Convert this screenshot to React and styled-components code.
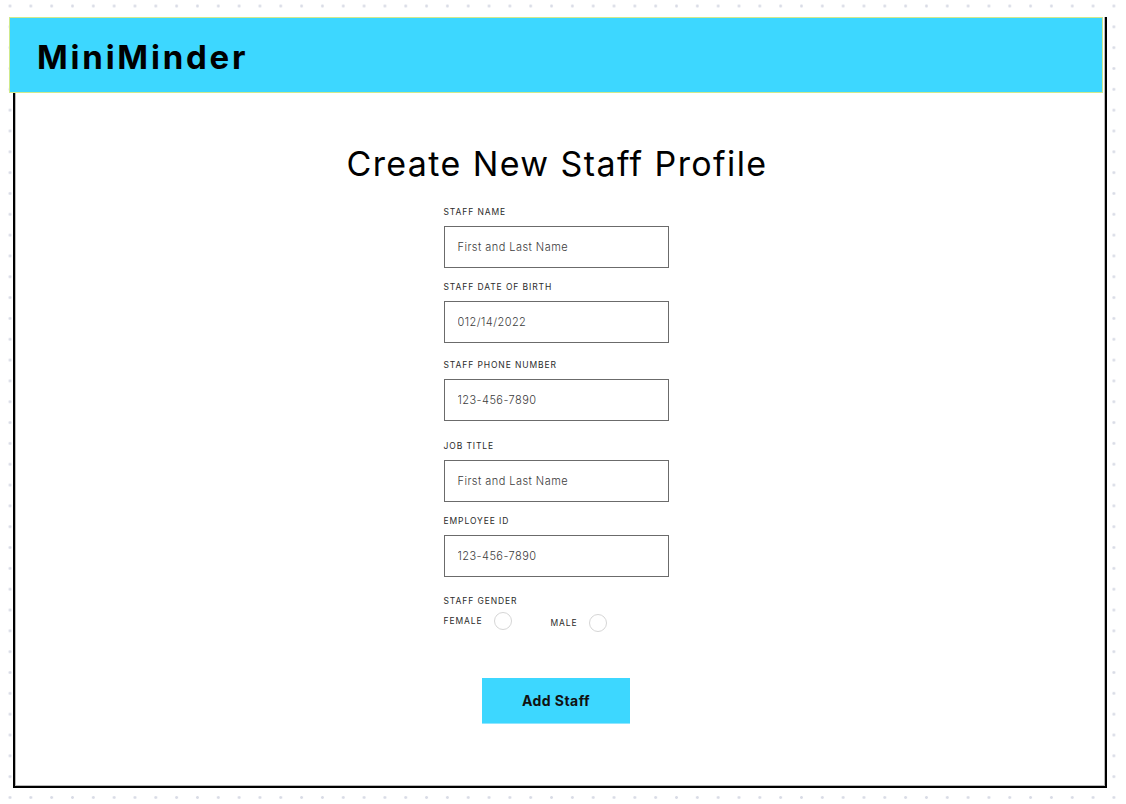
import React from "react";
import styled, { createGlobalStyle } from "styled-components";

const Global = createGlobalStyle`
  html, body {
    margin: 0;
    padding: 0;
    min-height: 100vh;
  }
  body {
    font-family: Inter, "Noto Sans", sans-serif;
    background-color: #ffffff;
    background-image: radial-gradient(circle, #d9dce6 0, #d9dce6 1px, rgba(255,255,255,0) 1.8px);
    background-size: 20.84px 20.84px;
    background-position: -0.42px -4.42px;
  }
  * { box-sizing: border-box; }
`;

const Page = styled.div`
  padding: 17px 0 0 13px;
  width: 1126px;
  height: 804px;
`;

const Frame = styled.div`
  width: 1094px;
  height: 771px;
  background: #ffffff;
  border: 2px solid #000;
  border-top: 0;
  box-shadow: inset -1px -1px 0 #b9b9b9, inset 1px 0 0 #b9b9b9;
  display: flex;
  flex-direction: column;
  align-items: center;
`;

const Header = styled.header`
  align-self: flex-start;
  margin-left: -6px;
  width: 1094px;
  height: 76px;
  background: #3dd7ff;
  border: 1px solid #cfe98c;
  display: flex;
  align-items: center;
  padding-left: 27px;
`;

const Brand = styled.h1`
  margin: 0;
  font-family: Inter, "Noto Sans", sans-serif;
  font-weight: 700;
  font-size: 33px;
  color: #000;
  letter-spacing: 2.8px;
  padding-top: 4px;
`;

const Main = styled.main`
  display: flex;
  flex-direction: column;
  align-items: center;
  margin-right: 8px;
`;

const Title = styled.h2`
  margin: 51px 0 0 2px;
  font-family: Inter, "Noto Sans", sans-serif;
  font-weight: 400;
  font-size: 34px;
  line-height: 40px;
  letter-spacing: 1.4px;
  color: #000;
`;

const Form = styled.form`
  width: 225px;
  margin-top: 23px;
  display: flex;
  flex-direction: column;
`;

const Field = styled.div`
  display: flex;
  flex-direction: column;
  gap: 8px;
  margin-top: ${(p) => p.$top}px;
`;

const Label = styled.label`
  font-family: Inter, "Noto Sans", sans-serif;
  font-size: 8.5px;
  line-height: 11px;
  letter-spacing: 0.9px;
  color: #2b2b2b;
  text-transform: uppercase;
`;

const Input = styled.input`
  width: 225px;
  height: 42px;
  border: 1px solid #6b6b6b;
  border-radius: 0;
  padding: 0 13px;
  font-family: Inter, "Noto Sans", sans-serif;
  font-size: 11px;
  font-weight: 300;
  letter-spacing: 0.45px;
  color: #333;
  background: #fff;
  outline: none;
  &::placeholder {
    color: #3c3c3c;
    opacity: 1;
  }
`;

const RadioRow = styled.div`
  display: flex;
  align-items: center;
  gap: 39px;
  margin-top: 5px;
`;

const Option = styled.label`
  display: flex;
  align-items: center;
  gap: 11px;
  font-family: Inter, "Noto Sans", sans-serif;
  font-size: 8.5px;
  letter-spacing: 0.9px;
  color: #2b2b2b;
  span {
    position: relative;
    top: ${(p) => p.$drop || 0}px;
  }
`;

const Circle = styled.span`
  width: 18px;
  height: 18px;
  border-radius: 50%;
  border: 1px solid #d6d6d6;
  background: #fff;
  display: inline-block;
`;

const Button = styled.button`
  margin-top: 48px;
  width: 148px;
  height: 46px;
  border: 0;
  border-bottom: 1px solid #8fe6ff;
  background: #3dd7ff;
  font-family: Inter, "Noto Sans", sans-serif;
  font-weight: 700;
  font-size: 14px;
  letter-spacing: 0.45px;
  color: #111;
  cursor: pointer;
`;

const fields = [
  { label: "Staff Name", placeholder: "First and Last Name", top: 0 },
  { label: "Staff Date of Birth", placeholder: "012/14/2022", top: 14 },
  { label: "Staff Phone Number", placeholder: "123-456-7890", top: 17 },
  { label: "Job Title", placeholder: "First and Last Name", top: 20 },
  { label: "Employee ID", placeholder: "123-456-7890", top: 14 },
];

export default function App() {
  return (
    <>
      <Global />
      <Page>
        <Frame>
          <Header>
            <Brand>MiniMinder</Brand>
          </Header>
          <Main>
            <Title>Create New Staff Profile</Title>
            <Form onSubmit={(e) => e.preventDefault()}>
              {fields.map((f, i) => (
                <Field key={i} $top={f.top}>
                  <Label>{f.label}</Label>
                  <Input placeholder={f.placeholder} />
                </Field>
              ))}
              <Field $top={19}>
                <Label>Staff Gender</Label>
              </Field>
              <RadioRow>
                <Option>
                  <span>FEMALE</span>
                  <Circle />
                </Option>
                <Option $drop={2}>
                  <span>MALE</span>
                  <Circle />
                </Option>
              </RadioRow>
            </Form>
            <Button type="button">Add Staff</Button>
          </Main>
        </Frame>
      </Page>
    </>
  );
}
